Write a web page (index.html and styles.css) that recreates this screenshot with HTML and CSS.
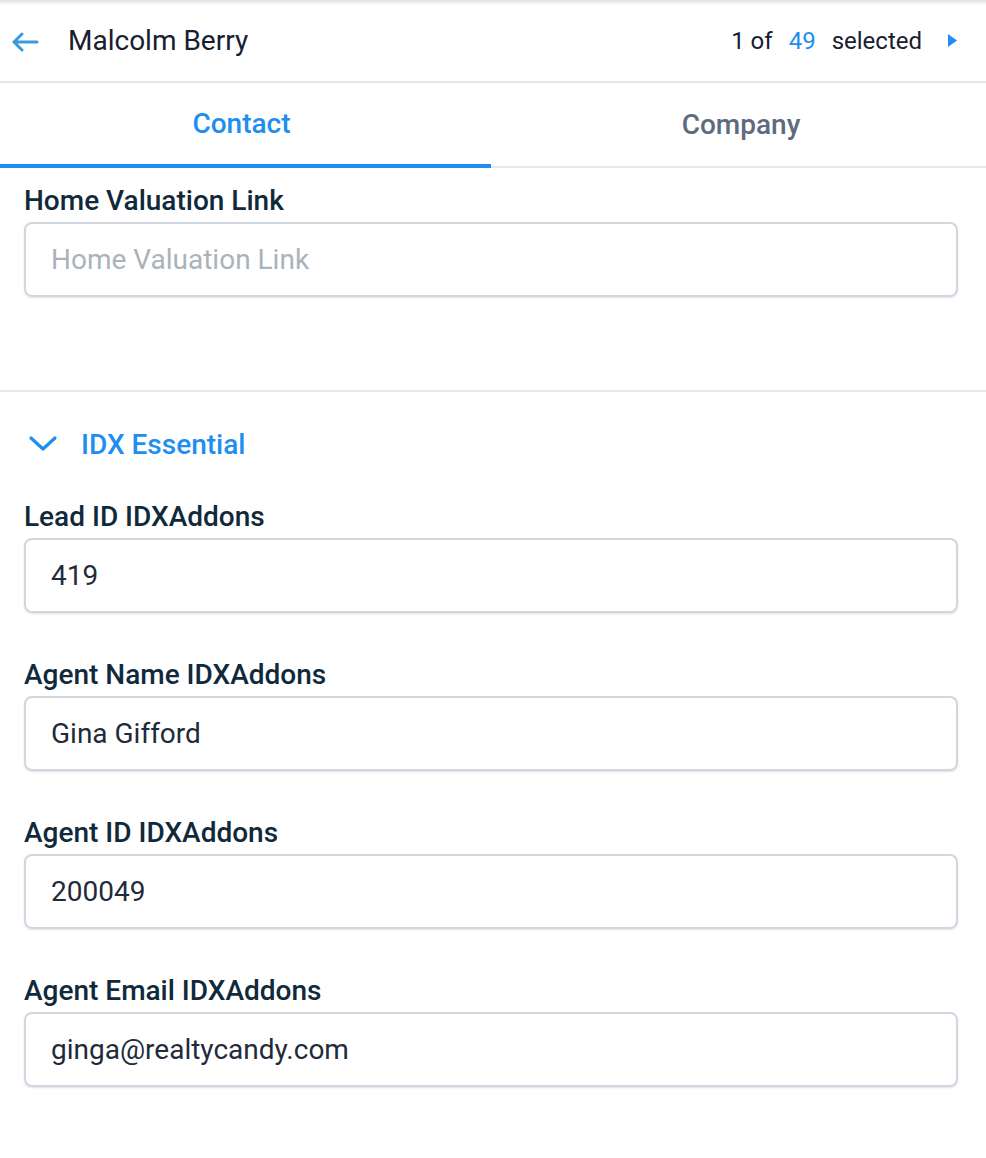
FILE: index.html
```html
<!DOCTYPE html>
<html>
<head>
<meta charset="utf-8">
<link rel="stylesheet" href="styles.css">
</head>
<body>
<div class="page">
  <header class="topbar">
    <div class="topbar-left">
      <svg class="back" width="28" height="20" viewBox="0 0 28 20"><path d="M26 10H3M11 2L3 10l8 8" fill="none" stroke="#3a9ad9" stroke-width="3" stroke-linecap="round" stroke-linejoin="round"/></svg>
      <span class="name">Malcolm Berry</span>
    </div>
    <div class="topbar-right">
      <span class="count">1 of</span>
      <span class="count total">49</span>
      <span class="count last">selected</span>
      <svg class="next" width="10" height="13" viewBox="0 0 10 13"><path d="M0 0L9 6.5L0 13Z" fill="#1e8ef0"/></svg>
    </div>
  </header>
  <nav class="tabs">
    <div class="tab active">Contact</div>
    <div class="tab">Company</div>
  </nav>
  <section class="section first">
    <div class="field">
      <label class="label">Home Valuation Link</label>
      <div class="input placeholder">Home Valuation Link</div>
    </div>
  </section>
  <section class="section group">
    <div class="group-head">
      <svg class="chev" width="30" height="18" viewBox="0 0 30 18"><path d="M3 3l12 11L27 3" fill="none" stroke="#1e8ef0" stroke-width="3.2" stroke-linecap="round" stroke-linejoin="round"/></svg>
      <span class="group-title">IDX Essential</span>
    </div>
    <div class="fields">
      <div class="field">
        <label class="label">Lead ID IDXAddons</label>
        <div class="input">419</div>
      </div>
      <div class="field">
        <label class="label">Agent Name IDXAddons</label>
        <div class="input">Gina Gifford</div>
      </div>
      <div class="field">
        <label class="label">Agent ID IDXAddons</label>
        <div class="input">200049</div>
      </div>
      <div class="field">
        <label class="label">Agent Email IDXAddons</label>
        <div class="input">ginga@realtycandy.com</div>
      </div>
    </div>
  </section>
</div>
</body>
</html>
```

FILE: styles.css
```css
* { box-sizing: border-box; }
html, body { margin: 0; padding: 0; background: #fff; }
body { font-family: Roboto, "Noto Sans", sans-serif; color: #10293b; }
.page { width: 986px; min-height: 1158px; background: #fff; }

.topbar {
  height: 83px;
  display: flex;
  align-items: center;
  justify-content: space-between;
  border-bottom: 2px solid #e6e7ec;
  background: linear-gradient(#dfe1e5, #fff 5px);
  padding: 0 28px 0 11px;
}
.topbar-left { display: flex; align-items: center; gap: 29px; }
.back { display: block; margin-top: 2px; }
.name { font-size: 28px; color: #17202f; }
.topbar-right { display: flex; align-items: center; }
.count { font-size: 24px; color: #17202f; margin-right: 16px; }
.count.total { color: #1e8ef0; }
.count.last { margin-right: 26px; }
.next { display: block; }

.tabs { display: flex; height: 85px; border-bottom: 2px solid #e8e9ef; }
.tab {
  height: 85px;
  margin-bottom: -2px;
  display: flex;
  align-items: center;
  justify-content: center;
  padding-bottom: 3px;
  font-size: 28px;
  font-weight: 500;
  color: #5e6a80;
}
.tab:first-child { width: 491px; padding-right: 8px; }
.tab:last-child { flex: 1; padding-left: 5px; }
.tab.active { color: #1e8ef0; border-bottom: 4px solid #1e8ef0; padding-bottom: 0; }

.section { padding: 0 28px 0 24px; }
.section.first { padding-top: 18px; padding-bottom: 93px; border-bottom: 2px solid #e8e9ef; }
.section.group { padding-top: 37px; padding-bottom: 60px; }

.field { display: flex; flex-direction: column; gap: 6px; }
.fields { display: flex; flex-direction: column; gap: 47px; margin-top: 43px; }
.label { font-size: 28px; font-weight: 500; line-height: 30px; color: #10293b; }
.input {
  height: 75px;
  border: 2px solid #d2d6df;
  border-radius: 8px;
  padding: 0 25px;
  display: flex;
  align-items: center;
  font-size: 28px;
  color: #1f2b3b;
  box-shadow: 0 1px 2px rgba(160, 168, 185, 0.35);
}
.input.placeholder { color: #aab2bb; }

.group-head { display: flex; align-items: center; gap: 23px; height: 30px; padding-left: 4px; }
.chev { display: block; }
.group-title { font-size: 28px; font-weight: 500; color: #1e8ef0; }
```
